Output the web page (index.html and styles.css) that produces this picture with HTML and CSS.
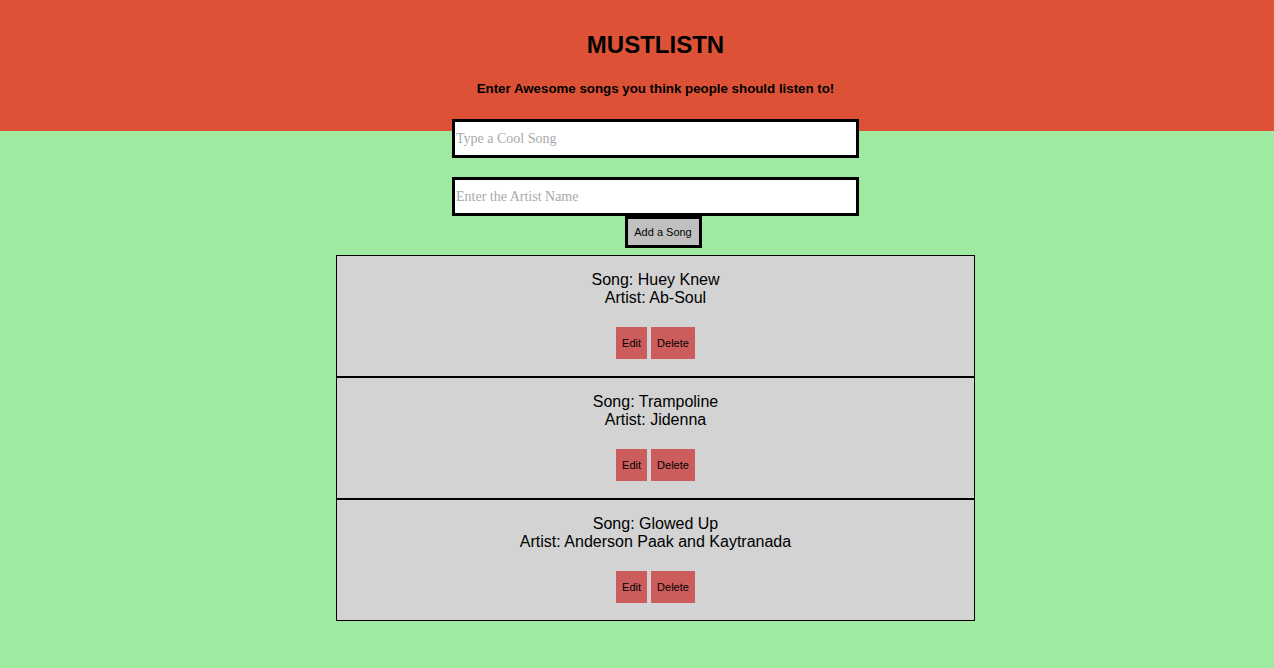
FILE: index.html
```html
<!DOCTYPE html>
<html>
<head>
<meta charset="utf-8">
<title>MUSTLISTN</title>
<link rel="stylesheet" href="styles.css">
</head>
<body>
<header class="hero">
  <div class="inner">
    <h1 class="title">MUSTLISTN</h1>
    <h5 class="subtitle">Enter Awesome songs you think people should listen to!</h5>
  </div>
</header>
<main class="inner">
  <form class="song-form">
    <input class="field" type="text" placeholder="Type a Cool Song">
    <input class="field" type="text" placeholder="Enter the Artist Name">
    <button class="add-btn" type="button">Add a Song</button>
  </form>
  <ul class="song-list">
    <li class="song-card">
      <div class="song-info">
        <div>Song: Huey Knew</div>
        <div>Artist: Ab-Soul</div>
      </div>
      <div class="actions">
        <button class="act-btn" type="button">Edit</button>
        <button class="act-btn" type="button">Delete</button>
      </div>
    </li>
    <li class="song-card">
      <div class="song-info">
        <div>Song: Trampoline</div>
        <div>Artist: Jidenna</div>
      </div>
      <div class="actions">
        <button class="act-btn" type="button">Edit</button>
        <button class="act-btn" type="button">Delete</button>
      </div>
    </li>
    <li class="song-card">
      <div class="song-info">
        <div>Song: Glowed Up</div>
        <div>Artist: Anderson Paak and Kaytranada</div>
      </div>
      <div class="actions">
        <button class="act-btn" type="button">Edit</button>
        <button class="act-btn" type="button">Delete</button>
      </div>
    </li>
  </ul>
</main>
</body>
</html>
```

FILE: styles.css
```css
* { box-sizing: border-box; }

html, body {
  margin: 0;
  padding: 0;
}

body {
  background: #a0e9a0;
  font-family: "Liberation Sans", Arial, Helvetica, sans-serif;
  color: #000;
  min-height: 668px;
}

.inner {
  display: block;
  padding-left: 37px;
}

.hero {
  background: #dd5236;
  text-align: center;
  padding: 31px 0 34px;
}

.title {
  margin: 0;
  font-size: 24px;
  line-height: 28px;
  font-weight: bold;
}

.subtitle {
  margin: 22px 0 0;
  font-size: 13.3px;
  line-height: 16px;
  font-weight: bold;
}

.song-form {
  display: flex;
  flex-direction: column;
  align-items: center;
  margin: -12px 0 0;
}

.field {
  width: 407px;
  height: 39px;
  border: 3px solid #000;
  background: #fff;
  padding: 1px 1px;
  font-family: "Liberation Serif", "Times New Roman", serif;
  font-size: 14px;
  outline: none;
}

.field + .field {
  margin-top: 19px;
}

.field::placeholder {
  color: #a9a9a9;
}

.add-btn {
  width: 77px;
  height: 32px;
  margin-left: 15px;
  border: 3px solid #000;
  background: #c0c0c0;
  font-family: "Liberation Sans", Arial, sans-serif;
  font-size: 11px;
  padding: 0;
  color: #000;
}

.song-list {
  list-style: none;
  margin: 7px auto 0;
  padding: 0;
  width: 639px;
}

.song-card {
  height: 122px;
  border: 1px solid #000;
  background: #d3d3d3;
  display: flex;
  flex-direction: column;
  align-items: center;
  padding-top: 15px;
}

.song-info {
  text-align: center;
  font-size: 16px;
  line-height: 18px;
}

.actions {
  display: flex;
  gap: 4px;
  margin-top: 20px;
}

.act-btn {
  height: 32px;
  border: none;
  background: #cd5c5c;
  font-family: "Liberation Sans", Arial, sans-serif;
  font-size: 11px;
  line-height: 12px;
  padding: 0 6px;
  color: #000;
}
```
